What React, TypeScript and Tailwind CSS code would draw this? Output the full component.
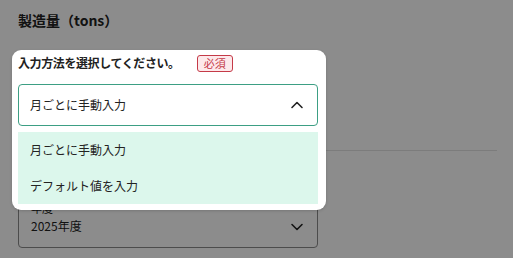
import React from "react";

const font = { fontFamily: '"Noto Sans CJK JP", "Noto Sans", sans-serif' };

function Chevron({ up }: { up?: boolean }) {
  return (
    <svg width="14" height="14" viewBox="0 0 14 14" fill="none">
      <path
        d={up ? "M2 9.5 L7 4.5 L12 9.5" : "M2 4.5 L7 9.5 L12 4.5"}
        stroke="#222"
        strokeWidth="1.6"
        strokeLinecap="round"
        strokeLinejoin="round"
      />
    </svg>
  );
}

export default function App() {
  return (
    <div className="relative w-[513px] h-[258px] overflow-hidden bg-white text-[#222]" style={font}>
      {/* page */}
      <div className="flex flex-col pl-[18px] pr-[16px] pt-[9px]">
        <div className="text-[14px] font-bold leading-[22px]">製造量（tons）</div>
        <div className="h-[119px]" />
        <div className="h-px bg-[#e2e2e2]" />
        <div className="h-[45px]" />
        <div className="w-[300px] h-[52px] border border-[#8a8a8a] rounded-[4px] flex items-start justify-between pl-[12px] pr-[13px] pt-[2px]">
          <div className="flex flex-col leading-[18px]">
            <span className="text-[11px]">年度</span>
            <span className="text-[12px]">2025年度</span>
          </div>
          <div className="mt-[21px]">
            <Chevron />
          </div>
        </div>
      </div>

      {/* overlay */}
      <div className="absolute inset-0 bg-black/45" />

      {/* popover */}
      <div className="absolute left-[12px] top-[50px] w-[314px] bg-white rounded-[9px] shadow-[0_1px_3px_rgba(0,0,0,0.15)] pl-[6px] pr-[8px] pt-[4px] pb-[6px] flex flex-col">
        <div className="h-[18px] flex items-center">
          <span className="text-[12px] font-bold tracking-[-0.4px]">入力方法を選択してください。</span>
          <span className="ml-[17px] h-[17px] px-[6px] flex items-center rounded-[3px] border border-[#c53a48] bg-[#fde9eb] text-[#c53a48] text-[11px] leading-none">
            必須
          </span>
        </div>
        <div className="mt-[12px] h-[42px] border border-[#3d9f84] rounded-[4px] flex items-center justify-between pl-[11px] pr-[13px]">
          <span className="text-[12px]">月ごとに手動入力</span>
          <Chevron up />
        </div>
        <div className="mt-[6px] bg-[#dcf7ec] flex flex-col">
          <div className="h-[36px] flex items-center pl-[12px] text-[12px]">月ごとに手動入力</div>
          <div className="h-[36px] flex items-center pl-[12px] text-[12px]">デフォルト値を入力</div>
        </div>
      </div>
    </div>
  );
}
